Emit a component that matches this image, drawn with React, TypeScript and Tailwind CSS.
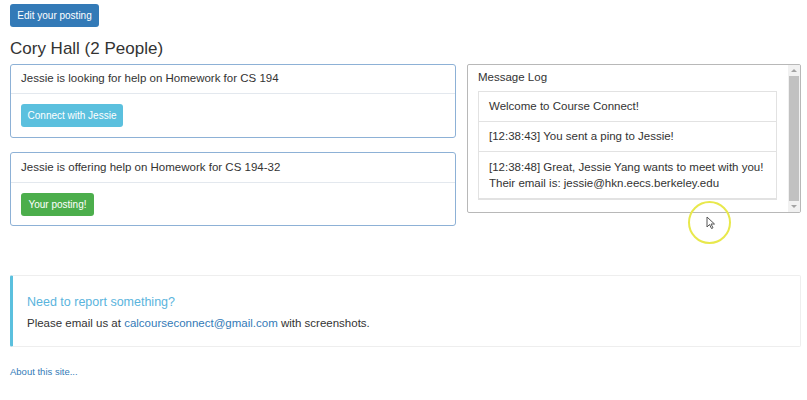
import React from 'react';

export default function App() {
    return (
        <div className="relative w-[807px] h-[400px] bg-white pl-[10px] pt-[4px] text-[#333] font-['Liberation_Sans',Arial,sans-serif]">
            <div className="flex">
                <button className="h-[23px] w-[89px] flex items-center justify-center rounded-[3px] bg-[#337ab7] text-white text-[10px] leading-none">
                    Edit your posting
                </button>
            </div>

            <h2 className="mt-[11px] text-[17px] leading-[22px] text-[#333]">Cory Hall (2 People)</h2>

            <div className="mt-[4px] flex gap-[11px] items-start">
                {/* postings */}
                <div className="w-[446px] shrink-0 flex flex-col gap-[14px]">
                    <div className="border border-[#8db1d6] rounded-[3px]">
                        <div className="h-[29px] px-[10px] flex items-center text-[11.5px] border-b border-[#e3e8ee]">
                            Jessie is looking for help on Homework for CS 194
                        </div>
                        <div className="flex px-[10px] pt-[10px] pb-[10px]">
                            <button className="h-[23px] w-[102px] flex items-center justify-center rounded-[3px] bg-[#5bc0de] text-white text-[10px] leading-none">
                                Connect with Jessie
                            </button>
                        </div>
                    </div>
                    <div className="border border-[#8db1d6] rounded-[3px]">
                        <div className="h-[30px] px-[10px] flex items-center text-[11.5px] border-b border-[#e3e8ee]">
                            Jessie is offering help on Homework for CS 194-32
                        </div>
                        <div className="flex px-[10px] pt-[10px] pb-[9px]">
                            <button className="h-[23px] w-[73px] flex items-center justify-center rounded-[3px] bg-[#4cae4c] text-white text-[10px] leading-none">
                                Your posting!
                            </button>
                        </div>
                    </div>
                </div>

                {/* message log */}
                <div className="w-[334px] shrink-0 h-[149px] border border-[#b8b8b8] rounded-[2px] flex overflow-hidden">
                    <div className="flex-1 pl-[10px] pr-[11px] overflow-hidden">
                        <div className="h-[26px] flex items-center text-[11.5px]">Message Log</div>
                        <div className="border border-[#e2e2e2] text-[11.5px]">
                            <div className="h-[30px] px-[10px] flex items-center border-b border-[#e2e2e2]">
                                Welcome to Course Connect!
                            </div>
                            <div className="h-[30px] px-[10px] flex items-center border-b border-[#e2e2e2]">
                                [12:38:43] You sent a ping to Jessie!
                            </div>
                            <div className="px-[10px] py-[7px] leading-[16px] border-b border-[#e2e2e2] whitespace-nowrap">
                                [12:38:48] Great, Jessie Yang wants to meet with you!
                                <br />
                                Their email is: jessie@hkn.eecs.berkeley.edu
                            </div>
                        </div>
                    </div>
                    <div className="w-[12px] bg-[#f1f1f1] flex flex-col">
                        <div className="h-[11px] flex items-center justify-center">
                            <div className="w-0 h-0 border-l-[3px] border-r-[3px] border-b-[3px] border-l-transparent border-r-transparent border-b-[#a3a3a3]" />
                        </div>
                        <div className="flex-1 mx-[1px] bg-[#c1c1c1]" />
                        <div className="h-[11px] flex items-center justify-center">
                            <div className="w-0 h-0 border-l-[3px] border-r-[3px] border-t-[3px] border-l-transparent border-r-transparent border-t-[#a3a3a3]" />
                        </div>
                    </div>
                </div>
            </div>

            {/* report box */}
            <div className="mt-[49px] w-[791px] h-[72px] border border-[#eeeeee] border-l-[3px] border-l-[#5bc0de] rounded-[2px] pl-[14px] pt-[18px]">
                <div className="text-[12.5px] leading-[17px] text-[#5ab4dd]">Need to report something?</div>
                <div className="mt-[4px] text-[11.5px] leading-[17px]">
                    Please email us at <span className="text-[#337ab7]">calcourseconnect@gmail.com</span> with screenshots.
                </div>
            </div>

            <div className="mt-[19px] text-[9.5px] leading-[12px] text-[#337ab7]">About this site...</div>

            {/* cursor highlight overlay */}
            <div className="absolute left-[688px] top-[201px] w-[43px] h-[43px] rounded-full border-2 border-[#e8e84c]" />
            <svg className="absolute left-[706px] top-[216px]" width="10" height="14" viewBox="0 0 10 14">
                <path d="M1 1 L1 11 L3.5 8.5 L5.5 12.5 L7 11.8 L5 8 L8.5 8 Z" fill="white" stroke="#555" strokeWidth="1" />
            </svg>
        </div>
    );
}
